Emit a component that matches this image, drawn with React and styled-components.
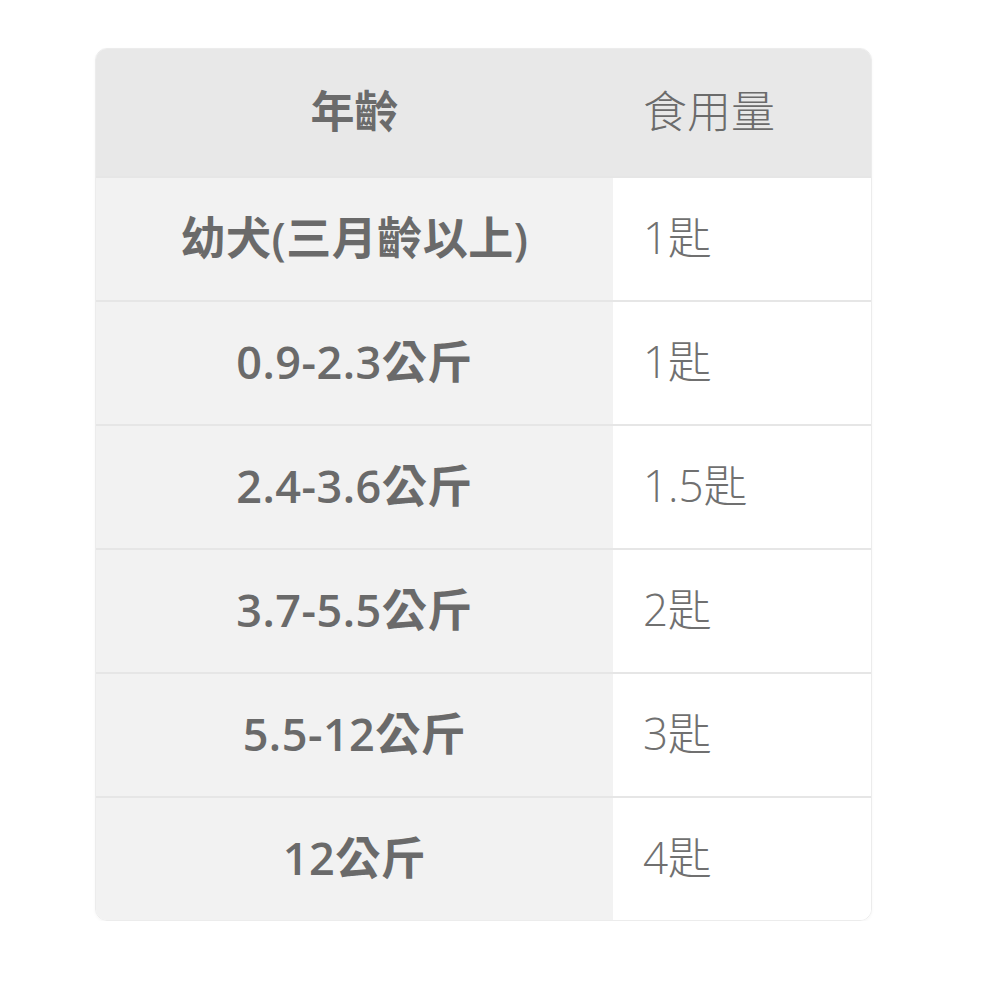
import React from "react";
import styled, { createGlobalStyle } from "styled-components";

const rows = [
  { age: "幼犬(三月齡以上)", amount: "1匙" },
  { age: "0.9-2.3公斤", amount: "1匙" },
  { age: "2.4-3.6公斤", amount: "1.5匙" },
  { age: "3.7-5.5公斤", amount: "2匙" },
  { age: "5.5-12公斤", amount: "3匙" },
  { age: "12公斤", amount: "4匙" },
];

const App = () => {
  return (
    <>
      <GlobalStyle />
      <Page>
        <Table>
          <HeadCell $first>年齡</HeadCell>
          <HeadCell>食用量</HeadCell>
          {rows.map((row, i) => (
            <React.Fragment key={i}>
              <AgeCell>{row.age}</AgeCell>
              <AmountCell>{row.amount}</AmountCell>
            </React.Fragment>
          ))}
        </Table>
      </Page>
    </>
  );
};

export default App;

const GlobalStyle = createGlobalStyle`
  body {
    margin: 0;
    background: #ffffff;
    font-family: "Open Sans", "Noto Sans CJK TC", sans-serif;
  }
`;

const Page = styled.div`
  padding: 48px 0 0 95px;
`;

const Table = styled.div`
  width: 777px;
  display: grid;
  grid-template-columns: 517px 1fr;
  border-radius: 12px;
  overflow: hidden;
  border: 1px solid #ececec;
  box-sizing: border-box;
  box-shadow: 0 1px 3px rgba(0, 0, 0, 0.04);
`;

const HeadCell = styled.div`
  height: 127px;
  box-sizing: border-box;
  padding-bottom: 8px;
  display: flex;
  align-items: center;
  justify-content: ${(p) => (p.$first ? "center" : "flex-start")};
  padding-left: ${(p) => (p.$first ? "0" : "30px")};
  background: #e8e8e8;
  color: #6b6b6b;
  font-size: 44px;
  font-weight: ${(p) => (p.$first ? 600 : 300)};
`;

const AgeCell = styled.div`
  height: 124px;
  box-sizing: border-box;
  border-top: 2px solid #e6e6e6;
  padding-bottom: 8px;
  display: flex;
  align-items: center;
  justify-content: center;
  background: #f2f2f2;
  color: #6a6a6a;
  font-size: 45px;
  font-weight: 600;
  letter-spacing: 0.5px;
`;

const AmountCell = styled.div`
  height: 124px;
  box-sizing: border-box;
  border-top: 2px solid #e6e6e6;
  padding-bottom: 8px;
  display: flex;
  align-items: center;
  padding-left: 30px;
  background: #ffffff;
  color: #707070;
  font-size: 44px;
  font-weight: 300;
`;
